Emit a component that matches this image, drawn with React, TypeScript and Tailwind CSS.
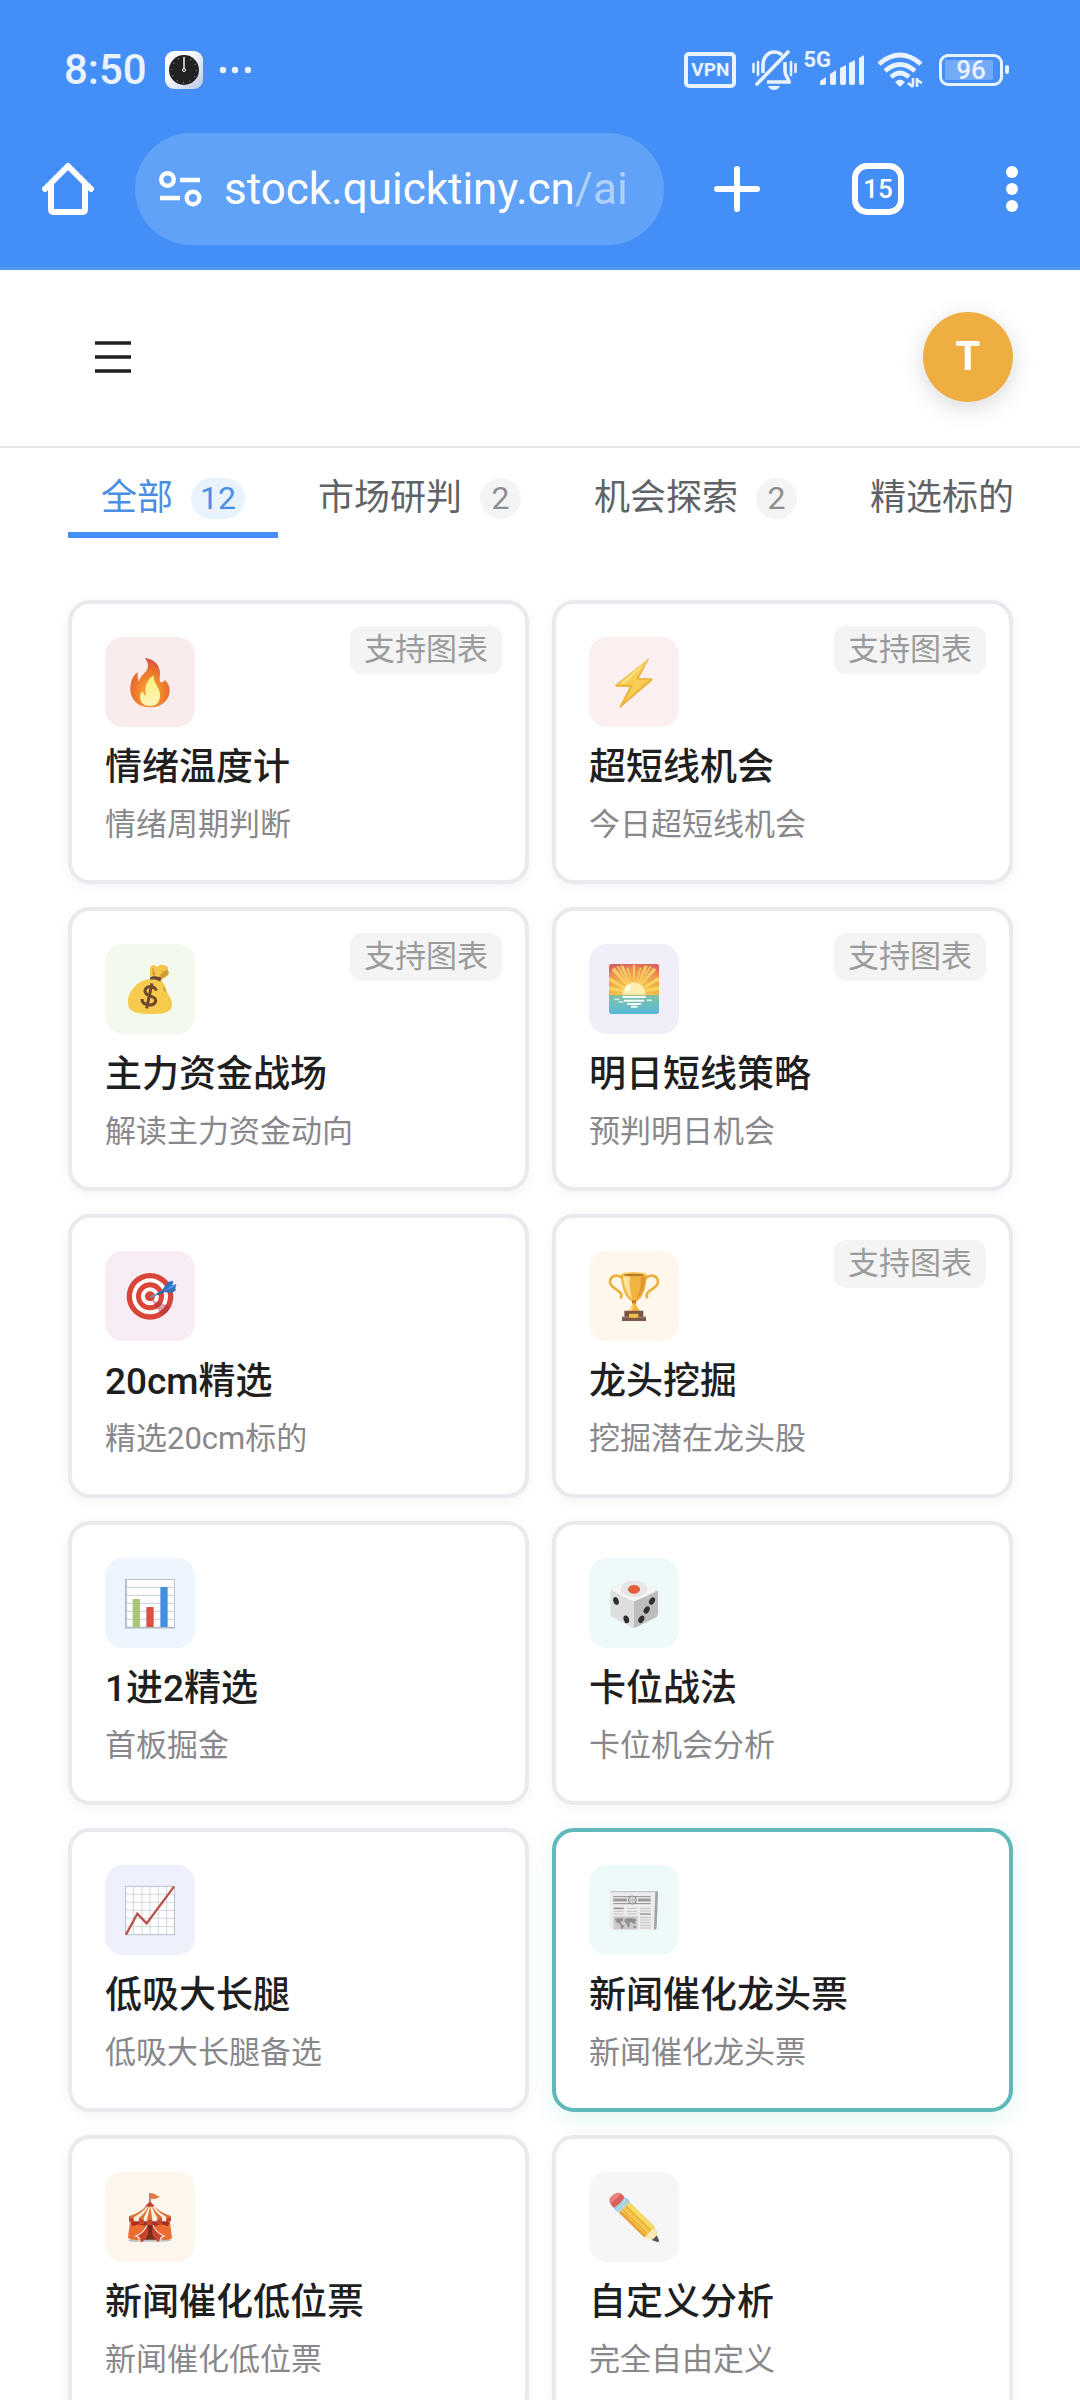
import React, { useState } from "react";

interface Tab {
  name: string;
  count?: number;
}

interface Strategy {
  title: string;
  desc: string;
  icon: React.ReactNode;
  bg: string;
  chart?: boolean;
}

const Fire = () => (
  <>
    <defs>
      <radialGradient id="fireOuter" cx="50%" cy="70%" r="65%">
        <stop offset="0.3" stopColor="#f5952d" />
        <stop offset="0.7" stopColor="#e9712d" />
        <stop offset="1" stopColor="#dc5340" />
      </radialGradient>
      <linearGradient id="fireInner" x1="0" y1="0" x2="0" y2="1">
        <stop offset="0" stopColor="#fdf07a" />
        <stop offset="1" stopColor="#fdf5b8" />
      </linearGradient>
    </defs>
    <path
      d="M59 3C86 5 106 24 105 50C105 60 102 70 106 75C112 78 115 74 119 69C128 76 134 87 134 100C134 128 112 151 76 151C40 151 16 128 16 95C16 76 24 54 38 46C37 58 38 66 42 74C46 58 56 52 64 42C72 30 70 14 59 3Z"
      fill="url(#fireOuter)"
    />
    <path
      d="M87 55C86 66 88 74 95 85C102 96 106 106 105 118C104 138 94 146 76 147C57 147 45 138 45 120C45 110 49 104 54 103C54 109 57 114 63 115C56 86 68 66 87 55Z"
      fill="url(#fireInner)"
    />
  </>
);

const Bolt = () => (
  <>
    <path d="M121 3L19 84Q18 89 23 89L62 90L31 150Q32 155 36 151L131 69Q132 64 126 64L90 63Z" fill="#eab43c" />
    <path d="M117 7L25 83L72 83L45 135L122 68L80 68Z" fill="#f6cd52" />
    <path d="M105 19L34 80L45 81L96 33Z" fill="#fbe48a" />
  </>
);

const MoneyBag = () => (
  <>
    <path d="M77 39C74 25 73 10 80 5C89 2 93 6 97 9C102 1 112 1 118 4C129 6 132 13 128 19C135 28 130 34 124 37L108 47Z" fill="#f3c64b" />
    <path d="M102 40C108 26 119 18 128 18C134 28 128 34 122 38L108 47Z" fill="#d79d35" />
    <path d="M83 34C82 23 81 15 84 9L92 35Z" fill="#d79d35" />
    <path d="M72 46C43 48 9 78 9 115C9 141 27 150 72 150C118 150 141 145 141 122C141 104 128 91 123 77C120 62 114 52 104 49Z" fill="#f6ca4c" />
    <path d="M115 67C121 71 124 78 122 86C116 82 113 76 115 67Z" fill="#d79d35" />
    <path d="M75 40C85 34 100 36 109 42L106 53C96 47 85 46 75 47Z" fill="#6b4630" />
    <path
      d="M94 80C92 70 83 68 74 68C61 69 56 82 64 90C72 98 91 96 92 109C92 122 78 125 67 122C57 120 51 114 51 105M81 58L65 133"
      fill="none"
      stroke="#6f482d"
      strokeWidth="9"
    />
  </>
);

const Sunrise = () => (
  <>
    <defs>
      <radialGradient id="sky" cx="50%" cy="95%" r="95%">
        <stop offset="0.4" stopColor="#fac04b" />
        <stop offset="0.85" stopColor="#ea8e55" />
        <stop offset="1" stopColor="#d9665a" />
      </radialGradient>
      <linearGradient id="sea" x1="0" y1="0" x2="0" y2="1">
        <stop offset="0" stopColor="#82c2a0" />
        <stop offset="1" stopColor="#57b8dd" />
      </linearGradient>
    </defs>
    <rect width="150" height="110" rx="7" fill="url(#sky)" />
    <path
      d="M75 88L0 66V78ZM75 88L3 38L-2 50ZM75 88L16 9L8 18ZM75 88L43 4L33 6ZM75 88L71 2H79ZM75 88L107 4L117 6ZM75 88L134 9L142 18ZM75 88L147 38L152 50ZM75 88L150 66V78ZM75 88L28 5L22 8ZM75 88L122 5L128 8ZM75 88L58 10L53 12ZM75 88L92 10L97 12Z"
      fill="#fbe06b"
      opacity="0.75"
    />
    <path d="M0 93H150V143Q150 150 143 150H7Q0 150 0 143Z" fill="url(#sea)" />
    <path d="M39 93A36 39 0 0 1 111 93Z" fill="#fbeeb0" stroke="#f2c55c" strokeWidth="2" />
    <ellipse cx="58" cy="72" rx="5" ry="10" transform="rotate(38 58 72)" fill="#fff" />
    <g stroke="#f5fafa" strokeWidth="6" strokeLinecap="round">
      <path d="M43 99H108M47 110H103M57 120H94M68 128H83" />
      <path d="M18 106H30M30 114H41M114 109H127" stroke="#c9ecec" strokeWidth="5" />
    </g>
  </>
);

const Target = () => (
  <>
    <circle cx="75" cy="76" r="70" fill="#da453a" />
    <circle cx="75" cy="76" r="54" fill="#fff" />
    <circle cx="75" cy="76" r="42" fill="#da453a" />
    <circle cx="75" cy="76" r="27" fill="#fff" />
    <circle cx="75" cy="76" r="15" fill="#da453a" />
    <path d="M97 94L136 106Q130 125 113 134L92 108L77 82Z" fill="#a92b3c" opacity="0.45" />
    <path d="M76 79L120 58" stroke="#7b93ad" strokeWidth="6" />
    <path d="M98 70L124 56" stroke="#3467a0" strokeWidth="8" />
    <path d="M110 59L128 33L145 29L142 42L154 40L151 53L153 58L140 66L116 63Z" fill="#3271bd" />
    <path d="M116 61L142 42L154 44Z" fill="#5599ed" />
  </>
);

const Trophy = () => (
  <>
    <path
      d="M40 22C25 7 3 15 3 33C3 55 45 58 36 79M111 22C125 7 147 15 147 33C147 55 105 58 114 79"
      fill="none"
      stroke="#eeae3a"
      strokeWidth="8"
      strokeLinecap="round"
    />
    <path d="M69 86H82V103L94 121H57L69 103Z" fill="#f2ba43" />
    <path d="M75 89L68 121H58L70 103Z" fill="#fae28c" />
    <path d="M36 10C36 48 48 78 67 91H84C103 78 113 48 113 10Z" fill="#f2b340" />
    <path d="M42 16C44 48 55 71 70 85C61 56 61 34 63 16Z" fill="#fbe49a" />
    <path d="M95 16C98 45 91 70 80 87C99 74 109 43 109 16Z" fill="#df952f" />
    <ellipse cx="74" cy="10" rx="38" ry="7" fill="#f5ca5d" />
    <ellipse cx="74" cy="12" rx="31" ry="4" fill="#b97c26" />
    <path d="M69 88H81V97H69Z" fill="#bd7a2b" />
    <path d="M46 119H103V137H111V150H39V137H46Z" fill="#7c5748" />
    <rect x="39" y="137" width="72" height="4" fill="#9b7460" />
    <rect x="60" y="128" width="28" height="12" rx="1" fill="#edbd4a" />
  </>
);

const BarChart = () => (
  <>
    <rect x="2" y="5" width="146" height="143" fill="#fff" />
    <path d="M2 28H148M2 52H148M2 76H148M2 100H148M2 124H148" stroke="#c6d1d8" strokeWidth="3" />
    <rect x="1.5" y="4.5" width="147" height="144" fill="none" stroke="#b6c2cc" strokeWidth="3" />
    <path d="M3 3V149H150" fill="none" stroke="#aebac4" strokeWidth="5" />
    <rect x="23" y="63" width="22" height="84" rx="2" fill="#a8c974" />
    <rect x="64" y="87" width="22" height="60" rx="2" fill="#d95343" />
    <rect x="106" y="27" width="22" height="120" rx="2" fill="#448fdb" />
  </>
);

const Dice = () => (
  <>
    <path d="M67 5Q75 1 83 5L140 31Q147 36 147 45V106Q147 114 140 118L83 147Q75 151 67 147L11 118Q4 114 4 106V45Q4 36 11 31Z" fill="#dedede" />
    <path d="M75 70L147 39V106Q147 114 140 118L83 147Q79 149 75 150Z" fill="#bcbcbc" />
    <path d="M67 5Q75 1 83 5L143 33Q140 42 83 67Q75 71 67 67Q12 42 7 34Z" fill="#f7f7f7" />
    <ellipse cx="75" cy="33" rx="40" ry="25" fill="#e6e6e6" />
    <ellipse cx="75" cy="34" rx="18" ry="13" fill="#e35f3d" />
    <g fill="#2f2f2f">
      <ellipse cx="21" cy="69" rx="8" ry="12" transform="rotate(-18 21 69)" />
      <ellipse cx="52" cy="124" rx="8" ry="12" transform="rotate(-18 52 124)" />
      <ellipse cx="129" cy="69" rx="8" ry="12" transform="rotate(28 129 69)" />
      <ellipse cx="113" cy="96" rx="8" ry="12" transform="rotate(28 113 96)" />
      <ellipse cx="97" cy="124" rx="8" ry="12" transform="rotate(28 97 124)" />
    </g>
  </>
);

const TrendChart = () => (
  <>
    <rect x="1" y="3" width="148" height="146" fill="#fff" />
    <path
      d="M26 3V149M51 3V149M75 3V149M100 3V149M125 3V149M1 28H149M1 52H149M1 76H149M1 100H149M1 125H149"
      stroke="#cfd6da"
      strokeWidth="3"
    />
    <rect x="1.5" y="4" width="147" height="145" fill="none" stroke="#b8c2c8" strokeWidth="3" />
    <path d="M3 149L37 86L65 115L147 5" fill="none" stroke="#b9524b" strokeWidth="7" />
  </>
);

const Newspaper = () => (
  <>
    <path d="M135 19H145Q148 19 147 24L143 128Q142 134 136 134L128 130Z" fill="#a3a3a3" />
    <path d="M7 19H139L135 134H9Q4 134 3 128V23Q3 19 7 19Z" fill="#ececec" />
    <path d="M5 20H139" stroke="#c3c3c3" strokeWidth="4" />
    <path d="M13 35H125M13 56H125" stroke="#8d8d8d" strokeWidth="3" />
    <path d="M13 45H54M87 45H125" stroke="#9b9b9b" strokeWidth="9" />
    <circle cx="70" cy="45" r="12" fill="#eee" stroke="#858585" strokeWidth="3" />
    <path d="M59 45H81M70 34V56M64 36V54M76 36V54" stroke="#a5a5a5" strokeWidth="2" />
    <path d="M14 70H44M93 87H125" stroke="#979797" strokeWidth="5" />
    <path
      d="M14 79H44M14 87H44M54 70H84M54 79H84M54 87H84M93 70H125M93 78H125M93 97H125M93 105H125M93 113H125M93 121H125M93 129H125"
      stroke="#c2c2c2"
      strokeWidth="3"
    />
    <rect x="14" y="94" width="72" height="39" fill="#c9c9c9" />
    <path d="M17 101L40 99L43 105L35 112L37 118L46 122L41 131L36 130L35 119L23 112ZM48 101L63 99L78 101L82 107L77 110L81 117L73 116L68 111L61 113L63 121L57 128L52 115L46 110ZM73 123L81 122L80 129L73 129Z" fill="#8f8f8f" />
  </>
);

const Circus = () => (
  <>
    <path d="M75 3V35" stroke="#8d5037" strokeWidth="4" />
    <path d="M77 4Q87 2 94 10Q99 14 106 12Q99 21 88 21Q82 19 77 21Z" fill="#e4773c" />
    <path d="M20 140Q9 142 10 146Q20 151 48 149H103Q132 150 141 145L128 137Z" fill="#bfc0c0" />
    <path d="M15 91H135L141 139Q134 144 119 144L75 138L34 144Q17 143 9 138Z" fill="#ed6c30" />
    <path d="M64 94H87L103 143H50Z" fill="#74301b" />
    <path d="M67 94Q66 119 34 133Q45 136 47 151Q67 144 70 119ZM83 94Q86 119 116 133Q105 136 103 150Q84 143 81 119Z" fill="#c8442c" />
    <path d="M66 96Q62 119 33 132Q45 134 44 148M84 96Q88 119 117 132Q106 134 105 148" stroke="#f6ded3" strokeWidth="4" fill="none" />
    <path d="M17 88H134L129 103L109 97L91 101L75 96L59 101L41 97L22 103Z" fill="#a92e25" />
    <path d="M63 39L75 28L87 39Q96 59 137 73L138 87H12V73Q54 59 63 39Z" fill="#fbeddc" />
    <path d="M65 39Q54 59 12 73V89L26 91V76Q56 59 67 42ZM70 41Q63 61 42 78V94L56 97V78Q65 60 73 42ZM76 42L81 78V98H67V79ZM80 42Q87 61 97 77V97L111 94V76Q90 59 82 42ZM87 40Q98 61 124 75V91L138 87V72Q97 58 87 39Z" fill="#dc7136" />
    <path d="M12 76L26 80V91L12 88ZM42 80L56 83V97L42 94ZM68 83H82V98H68ZM97 83L111 80V94L97 97ZM124 79L138 75V87L124 91Z" fill="#c8432e" />
    <path d="M62 41L75 28L88 41Q75 48 62 41Z" fill="#c9412d" />
  </>
);

const Pencil = () => (
  <>
    <path d="M62 31L135 102Q139 110 144 123L128 142L105 135L30 62Z" fill="#f4c546" />
    <path d="M37 57L112 132L105 135L30 62Z" fill="#e9a03d" />
    <path d="M54 40L126 112L135 104L62 31Z" fill="#f8db62" />
    <path d="M41 53L115 127M51 43L125 115" stroke="#d5932f" strokeWidth="2" />
    <path d="M135 102L150 145Q151 151 145 150L105 135Q116 133 116 124Q126 122 128 111Q136 112 135 102Z" fill="#fae9b7" />
    <path d="M143 130L150 145Q151 151 145 150L128 144Q137 138 143 130Z" fill="#575757" />
    <path d="M46 16Q61 20 62 32Q50 39 45 47Q37 54 31 62Q20 59 14 47Z" fill="#a1cddb" />
    <path d="M52 20Q45 35 20 54M58 26Q50 38 27 59" stroke="#c9e4eb" strokeWidth="3" fill="none" />
    <path d="M4 33Q-3 23 8 13Q22 0 32 3Q42 7 46 16Q37 34 15 47Q8 44 4 33Z" fill="#dc6059" />
    <path d="M4 27Q4 16 20 6Q29 1 34 5Q28 16 7 32Z" fill="#ea8580" />
  </>
);

const tabs: Tab[] = [
  { name: "全部", count: 12 },
  { name: "市场研判", count: 2 },
  { name: "机会探索", count: 2 },
  { name: "精选标的" },
];

const strategies: Strategy[] = [
  { title: "情绪温度计", desc: "情绪周期判断", icon: <Fire />, bg: "bg-[#faecec]", chart: true },
  { title: "超短线机会", desc: "今日超短线机会", icon: <Bolt />, bg: "bg-[#fbf0ef]", chart: true },
  { title: "主力资金战场", desc: "解读主力资金动向", icon: <MoneyBag />, bg: "bg-[#f4f9ed]", chart: true },
  { title: "明日短线策略", desc: "预判明日机会", icon: <Sunrise />, bg: "bg-[#f1eefa]", chart: true },
  { title: "20cm精选", desc: "精选20cm标的", icon: <Target />, bg: "bg-[#f8ecf5]" },
  { title: "龙头挖掘", desc: "挖掘潜在龙头股", icon: <Trophy />, bg: "bg-[#fef8ec]", chart: true },
  { title: "1进2精选", desc: "首板掘金", icon: <BarChart />, bg: "bg-[#edf6fe]" },
  { title: "卡位战法", desc: "卡位机会分析", icon: <Dice />, bg: "bg-[#eefafa]" },
  { title: "低吸大长腿", desc: "低吸大长腿备选", icon: <TrendChart />, bg: "bg-[#eef0fc]" },
  { title: "新闻催化龙头票", desc: "新闻催化龙头票", icon: <Newspaper />, bg: "bg-[#eefafa]" },
  { title: "新闻催化低位票", desc: "新闻催化低位票", icon: <Circus />, bg: "bg-[#fdf6ec]" },
  { title: "自定义分析", desc: "完全自由定义", icon: <Pencil />, bg: "bg-[#f6f6f6]" },
];

const StatusBar = () => (
  <div className="flex h-[133px] items-center justify-between pt-1.5 pr-[71px] pl-16 text-[#e8f3ff]">
    <div className="flex items-center">
      <span className="text-[42px] leading-none font-medium">8:50</span>
      <svg className="ml-[18px] h-[38px] w-[38px]" viewBox="0 0 38 38">
        <defs>
          <linearGradient id="clockCase" x1="0" y1="0" x2="1" y2="1">
            <stop offset="0.3" stopColor="#fff" />
            <stop offset="1" stopColor="#b9c9e8" />
          </linearGradient>
        </defs>
        <rect width="38" height="38" rx="9" fill="url(#clockCase)" />
        <circle cx="19" cy="19" r="15" fill="#222" />
        <circle cx="19" cy="19" r="12.5" fill="none" stroke="#8a8a8a" strokeWidth="1.5" strokeDasharray="0.8 5.745" />
        <path d="M19 6V18" stroke="#fff" strokeWidth="1.4" />
        <circle cx="19" cy="19" r="1.5" fill="#222" stroke="#fff" />
      </svg>
      <svg className="ml-4 h-[8px] w-[32px]" viewBox="0 0 32 8" fill="currentColor">
        <circle cx="4" cy="4" r="3.2" />
        <circle cx="16" cy="4" r="3.2" />
        <circle cx="29" cy="4" r="3.2" />
      </svg>
    </div>
    <div className="flex items-center">
      <span className="flex h-[36px] w-[52px] items-center justify-center rounded-[5px] border-4 border-[#e8f3ff] text-[19px] leading-none font-bold">
        VPN
      </span>
      <svg className="ml-4 h-[40px] w-[45px]" viewBox="0 0 45 40" fill="none" stroke="currentColor">
        <path d="M1.5 14V22M6 12V25M39 12V25M43.5 14V22" strokeWidth="2.6" strokeLinecap="round" />
        <path d="M11 23V16C11 7 16 2 22 2C25 2 28 3 30 5M33 12V21C33 26 37 29 37 32H15" strokeWidth="3.6" />
        <path d="M36 2L5 34" strokeWidth="3.6" strokeLinecap="round" />
        <path d="M16 36H28Q26 40 22 40Q18 40 16 36Z" fill="currentColor" stroke="none" />
      </svg>
      <span className="ml-1.5 self-start text-[22px] leading-5 font-bold">5G</span>
      <svg className="-ml-3 h-[32px] w-[46px]" viewBox="0 0 46 32" fill="currentColor">
        <path d="M1 31V27L7 23V29Q7 31 5 31ZM11 20L17 16V29Q17 31 15 31H13Q11 31 11 29ZM21 14L27 11V29Q27 31 25 31H23Q21 31 21 29ZM30 9L36 6V29Q36 31 34 31H32Q30 31 30 29ZM40 4L45 1V29Q45 31 43 31H42Q40 31 40 29Z" />
      </svg>
      <svg className="ml-3 h-[36px] w-[46px]" viewBox="0 0 46 36" fill="none" stroke="currentColor" strokeWidth="4.6">
        <path d="M2 12Q23 -6 44 12M8 19Q23 6 38 19M14 25Q23 17 32 25" />
        <path d="M18 30Q23 25 28 30L23 35Z" fill="currentColor" stroke="none" />
        <path d="M36 26V34M31 31L36 35M40 35V26M40 28L45 31" strokeWidth="2.6" />
      </svg>
      <div className="ml-4 flex items-center gap-0.5">
        <div className="h-[32px] w-[64px] rounded-[9px] border-3 border-[#e8f3ff] p-[3px]">
          <div className="flex h-full w-[48px] items-center justify-center bg-[#73aaf9] pl-1 text-[26px] leading-none font-medium">
            96
          </div>
        </div>
        <div className="h-[9px] w-[4px] rounded-sm bg-[#e8f3ff]" />
      </div>
    </div>
  </div>
);

const BrowserBar = () => (
  <div className="flex items-center border-b-3 border-[#5496ee] pr-[62px] pb-[22px] pl-[42px] text-white">
    <button type="button" aria-label="主页">
      <svg className="h-[54px] w-[52px]" viewBox="0 0 52 54" fill="none" stroke="currentColor" strokeWidth="6" strokeLinecap="round" strokeLinejoin="round">
        <path d="M3 27L26 4L49 27" />
        <path d="M9 24V47Q9 50 12 50H40Q43 50 43 47V24" />
      </svg>
    </button>
    <button type="button" className="ml-[41px] flex h-[112px] min-w-0 flex-1 items-center rounded-full bg-[#5fa2f7] pl-6">
      <svg className="h-[38px] w-[43px] shrink-0" viewBox="0 0 43 38" fill="none" stroke="currentColor" strokeWidth="4.4">
        <circle cx="8.5" cy="9.5" r="6.3" />
        <path d="M21 10H41M1 28H21" />
        <circle cx="34" cy="28" r="6.3" />
      </svg>
      <span className="ml-[22px] text-[44px] leading-none whitespace-nowrap">
        stock.quicktiny.cn<span className="text-[#afd1fb]">/ai</span>
      </span>
    </button>
    <button type="button" aria-label="新标签页" className="ml-[50px]">
      <svg className="h-[46px] w-[46px]" viewBox="0 0 46 46" stroke="currentColor" strokeWidth="6" strokeLinecap="round">
        <path d="M23 3V43M3 23H43" />
      </svg>
    </button>
    <button
      type="button"
      className="ml-[92px] flex h-[52px] w-[52px] items-center justify-center rounded-[15px] border-6 border-white text-[26px] leading-none font-medium"
    >
      15
    </button>
    <button type="button" aria-label="更多" className="ml-[102px]">
      <svg className="h-[48px] w-[12px]" viewBox="0 0 12 48" fill="currentColor">
        <circle cx="6" cy="7" r="6" />
        <circle cx="6" cy="24" r="6" />
        <circle cx="6" cy="41" r="6" />
      </svg>
    </button>
  </div>
);

const StrategyCard = ({ item, active, onSelect }: { item: Strategy; active: boolean; onSelect: () => void }) => (
  <button
    type="button"
    onClick={onSelect}
    className={`relative flex flex-col items-start rounded-[22px] border-4 bg-white px-[33px] pt-[33px] pb-[33px] text-left ${
      active
        ? "border-[#5fb9bb] shadow-[0_6px_24px_rgba(60,190,180,0.16)]"
        : "border-[#e8eaee] shadow-[0_3px_12px_rgba(0,0,0,0.05)]"
    }`}
  >
    <span className={`flex h-[90px] w-[90px] items-center justify-center rounded-[18px] ${item.bg}`}>
      <svg className="h-[50px] w-[50px] overflow-visible" viewBox="0 0 150 150">
        {item.icon}
      </svg>
    </span>
    <span className="mt-4 text-[37px] leading-[50px] font-medium text-[#1f1f1f]">{item.title}</span>
    <span className="mt-2.5 text-[31px] leading-[44px] text-[#88888c]">{item.desc}</span>
    {item.chart && (
      <span className="absolute top-[22px] right-[23px] rounded-xl bg-[#f4f4f4] px-3.5 text-[31px] leading-[48px] text-[#9b9b9b]">
        支持图表
      </span>
    )}
  </button>
);

export default function App() {
  const [tab, setTab] = useState("全部");
  const [selected, setSelected] = useState("新闻催化龙头票");

  return (
    <div className="flex h-screen flex-col overflow-hidden bg-white font-[Roboto,'Noto_Sans_CJK_SC',sans-serif]">
      <div className="shrink-0 bg-[#448ef7]">
        <StatusBar />
        <BrowserBar />
      </div>

      <header className="flex h-[178px] shrink-0 items-center justify-between border-b-2 border-[#e6e7e9] pr-[67px] pb-0.5 pl-[95px]">
        <button type="button" aria-label="菜单">
          <svg className="h-[32px] w-[36px]" viewBox="0 0 36 32" stroke="#231f20" strokeWidth="3.4">
            <path d="M0 2H36M0 16H36M0 30H36" />
          </svg>
        </button>
        <button
          type="button"
          className="flex h-[90px] w-[90px] items-center justify-center rounded-full bg-[#eeae42] text-[40px] leading-none font-bold text-white shadow-[0_6px_24px_rgba(0,0,0,0.15)]"
        >
          T
        </button>
      </header>

      <main className="min-h-0 flex-1 overflow-y-auto pr-[67px] pb-16 pl-[68px] [scrollbar-width:none]">
        <div role="tablist" className="flex h-[90px] gap-[7px] overflow-hidden">
          {tabs.map((t) => (
            <button
              key={t.name}
              type="button"
              role="tab"
              aria-selected={t.name === tab}
              onClick={() => setTab(t.name)}
              className={`flex shrink-0 items-center gap-[18px] border-b-6 px-[33px] pt-4 text-[36px] leading-none ${
                t.name === tab ? "border-[#448ef7] text-[#4a8fe3]" : "border-transparent text-[#5f6368]"
              }`}
            >
              {t.name}
              {t.count && (
                <span
                  className={`flex h-[41px] min-w-[41px] items-center justify-center rounded-full px-[9px] text-[32px] leading-none ${
                    t.name === tab ? "bg-[#e8f3fe]" : "bg-[#f4f4f4] text-[#8f8f8f]"
                  }`}
                >
                  {t.count}
                </span>
              )}
            </button>
          ))}
        </div>

        <div className="mt-[62px] grid grid-cols-2 gap-[23px]">
          {strategies.map((item) => (
            <StrategyCard
              key={item.title}
              item={item}
              active={item.title === selected}
              onSelect={() => setSelected(item.title)}
            />
          ))}
        </div>
      </main>
    </div>
  );
}
